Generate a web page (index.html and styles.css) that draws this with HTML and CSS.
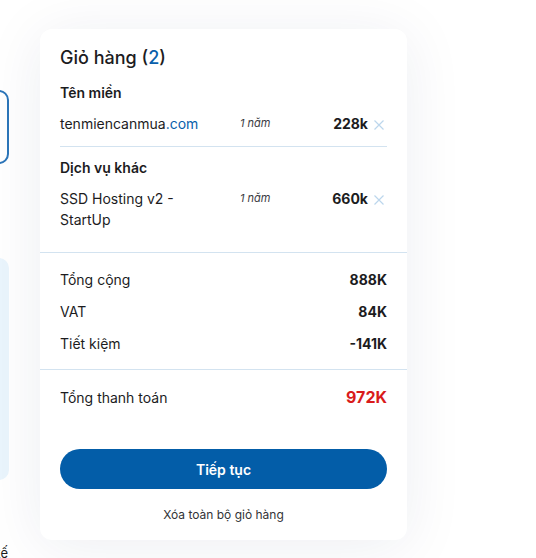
FILE: index.html
```html
<!DOCTYPE html>
<html lang="vi">
<head>
<meta charset="utf-8">
<title>Giỏ hàng</title>
<link rel="stylesheet" href="styles.css">
</head>
<body>
<div class="page">
  <aside class="side">
    <div class="side-box-outline"></div>
    <div class="side-box-fill"></div>
    <div class="side-text">Thiết lập cấu hình tối ưu theo nhu cầu và thiết kế</div>
  </aside>

  <section class="cart">
    <h2 class="cart-title">Giỏ hàng (<span class="accent">2</span>)</h2>

    <div class="group">
      <h3 class="group-title">Tên miền</h3>
      <div class="item">
        <div class="item-name">tenmiencanmua<span class="accent">.com</span></div>
        <div class="item-term">1 năm</div>
        <div class="item-price">228k</div>
        <button class="item-remove" aria-label="Xóa">
          <svg viewBox="0 0 10 10" width="10" height="10"><path d="M0.5 0.5 L9.5 9.5 M9.5 0.5 L0.5 9.5" stroke="currentColor" stroke-width="1.2" fill="none"/></svg>
        </button>
      </div>
    </div>

    <div class="group group-bordered">
      <h3 class="group-title">Dịch vụ khác</h3>
      <div class="item">
        <div class="item-name">SSD Hosting v2 - StartUp</div>
        <div class="item-term">1 năm</div>
        <div class="item-price">660k</div>
        <button class="item-remove" aria-label="Xóa">
          <svg viewBox="0 0 10 10" width="10" height="10"><path d="M0.5 0.5 L9.5 9.5 M9.5 0.5 L0.5 9.5" stroke="currentColor" stroke-width="1.2" fill="none"/></svg>
        </button>
      </div>
    </div>

    <div class="summary">
      <div class="sum-row"><span>Tổng cộng</span><strong>888K</strong></div>
      <div class="sum-row"><span>VAT</span><strong>84K</strong></div>
      <div class="sum-row"><span>Tiết kiệm</span><strong>-141K</strong></div>
    </div>

    <div class="total">
      <div class="sum-row"><span>Tổng thanh toán</span><strong class="total-value">972K</strong></div>
    </div>

    <div class="actions">
      <button class="btn-primary">Tiếp tục</button>
      <button class="btn-link">Xóa toàn bộ giỏ hàng</button>
    </div>
  </section>
</div>
</body>
</html>
```

FILE: styles.css
```css
* { box-sizing: border-box; }

html, body {
  margin: 0;
  padding: 0;
  background: #ffffff;
  width: 536px;
  height: 558px;
  overflow: hidden;
}

body {
  font-family: Inter, "Noto Sans", sans-serif;
  color: #1c1c1e;
}

.page {
  display: flex;
  align-items: flex-start;
}

.side {
  width: 200px;
  margin-left: -191px;
  flex-shrink: 0;
  display: flex;
  flex-direction: column;
}

.side-box-outline {
  margin-top: 90px;
  height: 74px;
  border: 2px solid #2c75b9;
  border-radius: 10px;
}

.side-box-fill {
  margin-top: 94px;
  height: 222px;
  background: #eaf5fd;
  border-radius: 10px;
}

.side-text {
  margin-top: 63px;
  margin-left: -1px;
  font-size: 13px;
  line-height: 20px;
  white-space: nowrap;
  direction: rtl;
  text-align: left;
  overflow: hidden;
  width: 200px;
  color: #1c1c1e;
}

.cart {
  margin-left: 31px;
  margin-top: 29px;
  width: 367px;
  height: 511px;
  background: #ffffff;
  border-radius: 12px;
  box-shadow: 0 6px 60px rgba(30, 40, 90, 0.08);
  display: flex;
  flex-direction: column;
}

.accent { color: #0a5fab; }

.cart-title {
  margin: 0;
  padding: 17px 20px 0;
  font-size: 18px;
  line-height: 24px;
  font-weight: 500;
  color: #1c1c1e;
}

.group {
  padding: 0 20px;
}

.group-title {
  margin: 0;
  padding-top: 10px;
  font-size: 14px;
  line-height: 18px;
  font-weight: 600;
}

.group:first-of-type .group-title { padding-top: 14px; }

.item {
  display: grid;
  grid-template-columns: 160px 1fr auto 19px;
  column-gap: 20px;
  align-items: start;
  padding-top: 11px;
  padding-bottom: 12px;
  border-bottom: 1px solid #d3e3f0;
  font-size: 14px;
  line-height: 21px;
}

.group-bordered .item {
  border-bottom: none;
  padding-top: 11px;
  padding-bottom: 22px;
}

.group-bordered {
  padding-top: 2px;
  border-bottom: 1px solid #d3e3f0;
}

.item-name { color: #1c1c1e; }

.item-term {
  font-size: 11px;
  font-style: italic;
  color: #3b3b3f;
  line-height: 21px;
}

.item-price {
  font-weight: 700;
  text-align: right;
  margin-right: -20px;
}

.item-remove {
  border: none;
  background: none;
  padding: 0;
  margin: 0;
  color: #bcd6ec;
  display: flex;
  align-items: center;
  justify-content: flex-end;
  height: 21px;
  padding-right: 3px;
  padding-top: 3px;
  cursor: pointer;
}

.summary {
  padding: 16px 20px 15px;
  border-bottom: 1px solid #d3e3f0;
  display: flex;
  flex-direction: column;
  gap: 11px;
}

.sum-row {
  display: flex;
  justify-content: space-between;
  align-items: center;
  font-size: 14px;
  line-height: 21px;
}

.sum-row strong { font-weight: 700; }

.total {
  padding: 17px 20px 0;
}

.total-value {
  color: #d91b1b;
  font-size: 16px;
}

.actions {
  padding: 41px 20px 0;
  display: flex;
  flex-direction: column;
  align-items: stretch;
}

.btn-primary {
  height: 40px;
  border: none;
  border-radius: 20px;
  background: #035da8;
  color: #ffffff;
  font-family: Inter, "Noto Sans", sans-serif;
  font-size: 14px;
  font-weight: 600;
  cursor: pointer;
}

.btn-link {
  margin-top: 16px;
  border: none;
  background: none;
  font-family: Inter, "Noto Sans", sans-serif;
  font-size: 12px;
  line-height: 18px;
  color: #333336;
  cursor: pointer;
}
```
